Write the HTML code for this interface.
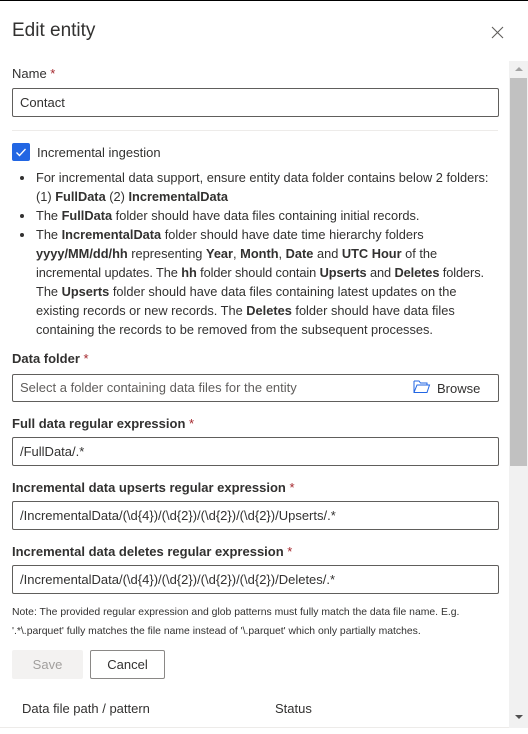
<!DOCTYPE html>
<html><head><style>
body{margin:0;width:528px;height:734px;background:#fff;overflow:hidden;position:relative;font-family:"Liberation Sans",sans-serif;color:#323130}
.a{position:absolute}
.lbl{font-size:13px;font-weight:bold;color:#323130}
.lbl b{color:#a4262c;font-weight:normal}
.inp{position:absolute;left:12px;width:487px;border:1px solid #605e5c;border-radius:2px;box-sizing:border-box;font-size:13px;padding-left:7px;color:#323130}
ul{margin:0;padding:0;list-style:none}
li{position:relative;padding-left:24px}
li:before{content:"";position:absolute;left:8px;top:8px;width:4px;height:4px;border-radius:50%;background:#323130}
.l{white-space:nowrap;display:block}
</style></head><body>
<div class="a" style="left:0;top:0;width:528px;height:1px;background:#000"></div>
<div class="a" style="left:12px;top:20px;font-size:19px;color:#323130">Edit entity</div>
<svg class="a" style="left:491px;top:26px" width="13" height="13"><path d="M1 1L12 12M12 1L1 12" stroke="#605e5c" stroke-width="1.1"/></svg>
<div class="a" style="left:509px;top:61px;width:19px;height:667px;background:#f1f1f1"></div>
<div class="a" style="left:510px;top:78px;width:17px;height:388px;background:#c1c1c1"></div>
<div class="a" style="left:515px;top:67px;width:0;height:0;border-left:4px solid transparent;border-right:4px solid transparent;border-bottom:4px solid #a3a3a3"></div>
<div class="a" style="left:515px;top:715px;width:0;height:0;border-left:4px solid transparent;border-right:4px solid transparent;border-top:4px solid #505050"></div>

<div class="a lbl" style="left:12px;top:66px;font-weight:normal">Name <b>*</b></div>
<div class="inp" style="top:88px;height:29px;line-height:27px">Contact</div>
<div class="a" style="left:12px;top:130px;width:486px;height:1px;background:#edebe9"></div>
<div class="a" style="left:12px;top:143px;width:18px;height:18px;background:#2266e3;border-radius:2px"></div>
<svg class="a" style="left:12px;top:143px" width="18" height="18"><path d="M4.5 9.5L7.5 12.5L13.5 6" stroke="#fff" stroke-width="1.3" fill="none"/></svg>
<div class="a" style="left:37px;top:145px;font-size:13px">Incremental ingestion</div>
<ul class="a" style="left:12px;top:168px;width:478px;font-size:12.8px;line-height:19px">
<li>For incremental data support, ensure entity data folder contains below 2 folders: (1) <b>FullData</b> (2) <b>IncrementalData</b></li>
<li>The <b>FullData</b> folder should have data files containing initial records.</li>
<li><span class="l">The <b>IncrementalData</b> folder should have date time hierarchy folders</span><span class="l"><b>yyyy/MM/dd/hh</b> representing <b>Year</b>, <b>Month</b>, <b>Date</b> and <b>UTC Hour</b> of the</span><span class="l" style="letter-spacing:-0.1px">incremental updates. The <b>hh</b> folder should contain <b>Upserts</b> and <b>Deletes</b> folders.</span><span class="l">The <b>Upserts</b> folder should have data files containing latest updates on the</span><span class="l">existing records or new records. The <b>Deletes</b> folder should have data files</span><span class="l">containing the records to be removed from the subsequent processes.</span></li>
</ul>
<div class="a lbl" style="left:12px;top:351px">Data folder <b>*</b></div>
<div class="inp" style="top:374px;height:28px;line-height:26px;color:#605e5c">Select a folder containing data files for the entity</div>
<svg class="a" style="left:413px;top:380px" width="18" height="14"><path d="M1 1H6L7.5 3H14V5M1 1V12.5H14L16.5 5H4L1 12.5" stroke="#2266e3" fill="none" stroke-width="1"/></svg>
<div class="a" style="left:437px;top:381px;font-size:13px">Browse</div>
<div class="a lbl" style="left:12px;top:416px">Full data regular expression <b>*</b></div>
<div class="inp" style="top:437px;height:29px;line-height:27px">/FullData/.*</div>
<div class="a lbl" style="left:12px;top:480px">Incremental data upserts regular expression <b>*</b></div>
<div class="inp" style="top:501px;height:29px;line-height:27px">/IncrementalData/(\d{4})/(\d{2})/(\d{2})/(\d{2})/Upserts/.*</div>
<div class="a lbl" style="left:12px;top:544px">Incremental data deletes regular expression <b>*</b></div>
<div class="inp" style="top:565px;height:29px;line-height:27px">/IncrementalData/(\d{4})/(\d{2})/(\d{2})/(\d{2})/Deletes/.*</div>
<div class="a" style="left:12px;top:603px;width:490px;font-size:10.4px;line-height:19px">Note: The provided regular expression and glob patterns must fully match the data file name. E.g. '.*\.parquet' fully matches the file name instead of '\.parquet' which only partially matches.</div>
<div class="a" style="left:12px;top:650px;width:71px;height:29px;background:#f3f2f1;color:#a19f9d;font-size:13px;text-align:center;line-height:29px;border-radius:2px">Save</div>
<div class="a" style="left:90px;top:650px;width:75px;height:29px;box-sizing:border-box;border:1px solid #8a8886;font-size:13px;text-align:center;line-height:27px;border-radius:2px">Cancel</div>
<div class="a" style="left:22px;top:701px;font-size:13px">Data file path / pattern</div>
<div class="a" style="left:275px;top:701px;font-size:13px">Status</div>
<div class="a" style="left:0;top:727px;width:509px;height:1px;background:#edebe9"></div>
</body></html>
